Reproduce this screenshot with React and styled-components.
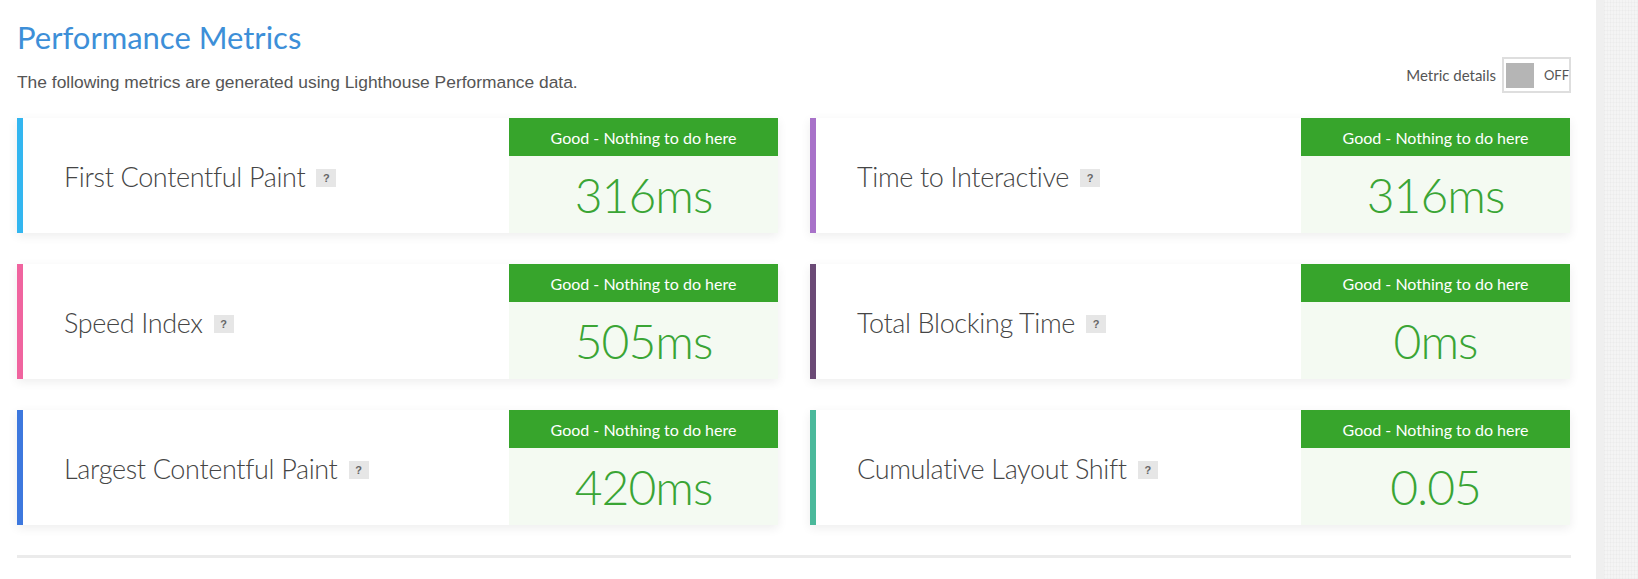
import React from "react";
import styled, { createGlobalStyle } from "styled-components";

const Global = createGlobalStyle`
  html, body { margin: 0; padding: 0; background: #fff; }
  body { font-family: "Lato", "Open Sans", sans-serif; }
  * { box-sizing: border-box; }
`;

const Page = styled.div`
  display: flex;
  width: 1638px;
  height: 579px;
  overflow: hidden;
`;

const Main = styled.main`
  flex: 1;
  padding: 17px 25px 0 17px;
  display: flex;
  flex-direction: column;
`;

const Sidebar = styled.aside`
  width: 42px;
  flex: none;
  border-left: 8px solid #efefef;
  background-color: #f4f4f4;
  background-image:
    repeating-linear-gradient(90deg, rgba(0,0,0,0.018) 0 1px, transparent 1px 3px),
    repeating-linear-gradient(0deg, rgba(0,0,0,0.02) 0 1px, transparent 1px 4px);
`;

const Title = styled.h1`
  margin: 0;
  font-family: "Lato", sans-serif;
  font-weight: 400;
  font-size: 31px;
  line-height: 40px;
  color: #3d8fd8;
`;

const SubRow = styled.div`
  display: flex;
  justify-content: space-between;
  align-items: flex-end;
`;

const Subtitle = styled.p`
  margin: 0;
  font-family: "Liberation Sans", Arial, sans-serif;
  font-size: 17.4px;
  color: #555;
`;

const ToggleWrap = styled.div`
  display: flex;
  align-items: center;
  gap: 6px;
  font-family: "Lato", sans-serif;
  font-size: 15px;
  color: #555;
`;

const Toggle = styled.div`
  width: 69px;
  height: 36px;
  border: 2px solid #dedede;
  display: flex;
  align-items: center;
  padding: 0 0 0 2px;
  gap: 10px;
  font-size: 13px;
  color: #555;
`;

const Knob = styled.span`
  width: 29px;
  height: 25px;
  background: #b5b5b5;
`;

const Grid = styled.div`
  margin-top: 25px;
  display: grid;
  grid-template-columns: 761px 760px;
  column-gap: 32px;
  row-gap: 31px;
`;

const Card = styled.div`
  display: flex;
  height: 115px;
  background: #fff;
  border-left: 6px solid ${(p) => p.$accent};
  box-shadow: 0 3px 10px rgba(0, 0, 0, 0.075);
`;

const LabelArea = styled.div`
  flex: 1;
  display: flex;
  align-items: center;
  padding: 2px 0 0 41px;
  gap: 11px;
`;

const Label = styled.span`
  font-family: "Lato", sans-serif;
  font-weight: 300;
  font-size: 27px;
  letter-spacing: -0.35px;
  color: #454545;
`;

const Help = styled.span`
  width: 20px;
  height: 18px;
  background: #e6e6e6;
  color: #666;
  font-family: "Liberation Sans", Arial, sans-serif;
  font-weight: 700;
  font-size: 11px;
  display: inline-flex;
  align-items: center;
  justify-content: center;
  margin-top: 2px;
`;

const Grade = styled.div`
  width: 269px;
  display: flex;
  flex-direction: column;
`;

const GradeHeader = styled.div`
  height: 38px;
  background: #37a52c;
  color: #fff;
  font-family: "Lato", sans-serif;
  font-weight: 400;
  font-size: 16px;
  display: flex;
  align-items: center;
  justify-content: center;
`;

const GradeValue = styled.div`
  flex: 1;
  background: #f4faf2;
  color: #3aa535;
  font-family: "Lato", sans-serif;
  font-weight: 300;
  font-size: 48px;
  letter-spacing: -1px;
  display: flex;
  align-items: center;
  justify-content: center;
`;

const Divider = styled.hr`
  margin: 30px 0 0;
  border: none;
  height: 3px;
  background: #ebebeb;
`;

const metrics = [
  { label: "First Contentful Paint", value: "316ms", accent: "#33b6f0" },
  { label: "Time to Interactive", value: "316ms", accent: "#a872c9" },
  { label: "Speed Index", value: "505ms", accent: "#f0649f" },
  { label: "Total Blocking Time", value: "0ms", accent: "#6b4a76" },
  { label: "Largest Contentful Paint", value: "420ms", accent: "#3d78de" },
  { label: "Cumulative Layout Shift", value: "0.05", accent: "#4bb99b" },
];

export default function App() {
  return (
    <>
      <Global />
      <Page>
        <Main>
          <Title>Performance Metrics</Title>
          <SubRow>
            <Subtitle>
              The following metrics are generated using Lighthouse Performance data.
            </Subtitle>
            <ToggleWrap>
              Metric details
              <Toggle>
                <Knob />
                OFF
              </Toggle>
            </ToggleWrap>
          </SubRow>
          <Grid>
            {metrics.map((m) => (
              <Card key={m.label} $accent={m.accent}>
                <LabelArea>
                  <Label>{m.label}</Label>
                  <Help>?</Help>
                </LabelArea>
                <Grade>
                  <GradeHeader>Good - Nothing to do here</GradeHeader>
                  <GradeValue>{m.value}</GradeValue>
                </Grade>
              </Card>
            ))}
          </Grid>
          <Divider />
        </Main>
        <Sidebar />
      </Page>
    </>
  );
}
